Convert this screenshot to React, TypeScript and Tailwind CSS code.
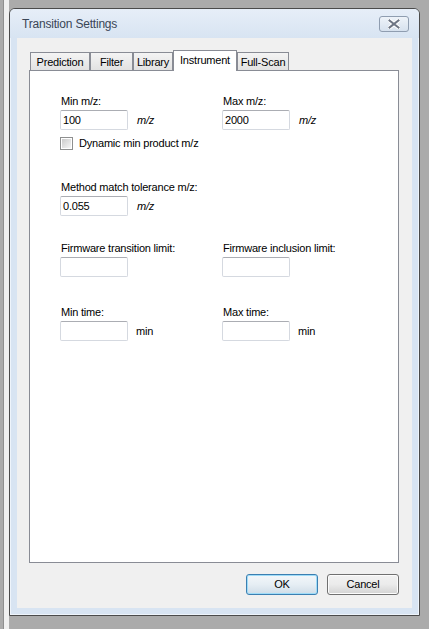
const tabs = [
  { label: 'Prediction', w: 'w-[60px]' },
  { label: 'Filter', w: 'w-[43px]' },
  { label: 'Library', w: 'w-[40px]' },
  { label: 'Instrument', w: 'w-[64px]', active: true },
  { label: 'Full-Scan', w: 'w-[52px]' },
];

const TextBox = ({ value }: { value?: string }) => (
  <div className="w-[68px] h-[20px] rounded-[2px] border border-[#d5d9e0] border-t-[#abadb3] bg-white px-[2px] text-[11px] leading-[18px] text-black">
    {value}
  </div>
);

const Field = ({ label, value, unit, italic }: { label: string; value?: string; unit?: string; italic?: boolean }) => (
  <div className="flex flex-col">
    <div className="h-[13px] leading-[13px] text-[11px] pl-px">{label}</div>
    <div className="mt-[2px] flex items-center">
      <TextBox value={value} />
      {unit && (
        <span className={italic ? 'ml-[9px] text-[11px] italic' : 'ml-[8px] text-[11px]'}>{unit}</span>
      )}
    </div>
  </div>
);

const Button = ({ label, isDefault }: { label: string; isDefault?: boolean }) => (
  <button
    type="button"
    className={
      isDefault
        ? 'w-[72px] h-[21px] rounded-[3px] border border-[#3c7fb1] bg-gradient-to-b from-[#f3f7fa] via-[#e6eef4] to-[#cfdde8] shadow-[inset_0_0_0_1px_#9fdcf8] text-[11px] text-black'
        : 'w-[72px] h-[21px] rounded-[3px] border border-[#707070] bg-gradient-to-b from-[#f2f2f2] via-[#ebebeb] to-[#d3d3d3] shadow-[inset_0_0_0_1px_#fcfcfc] text-[11px] text-black'
    }
  >
    {label}
  </button>
);

export default function App() {
  return (
    <div className="w-[429px] h-[629px] bg-[#ababab] flex overflow-hidden font-['Liberation_Sans',Arial,sans-serif] tracking-[-0.2px] text-black">
      <div className="w-[3px] bg-[#ababab]" />
      <div className="w-px bg-[#8f8f8f]" />
      <div className="w-[5px] bg-[#f0f0f0]" />
      <div className="pt-[8px]">
        <div className="w-[411px] h-[608px] rounded-t-[6px] border border-[#4b4b4b] bg-[#d8e4f2] flex flex-col shadow-[inset_0_0_0_1px_#eef4fb]">
          <div className="h-[29px] flex items-center justify-between pl-[12px] pr-[10px] bg-gradient-to-b from-[#e6eef8] to-[#d8e4f2] rounded-t-[5px]">
            <span className="text-[12px] text-[#3a4656]">Transition Settings</span>
            <div className="w-[30px] h-[16px] rounded-[3px] border border-[#8f9db0] bg-gradient-to-b from-[#eef3f9] to-[#d6e1ee] flex items-center justify-center">
              <svg width="12" height="10" viewBox="0 0 12 10">
                <path d="M1.5 1.5 L10.5 8.5 M10.5 1.5 L1.5 8.5" stroke="#ffffff" strokeWidth="4" strokeLinecap="square" />
                <path d="M1.5 1.5 L10.5 8.5 M10.5 1.5 L1.5 8.5" stroke="#6d7584" strokeWidth="2" strokeLinecap="square" />
              </svg>
            </div>
          </div>
          <div className="mx-[7px] h-[570px] bg-[#f0f0f0] pl-[12px] pr-[13px] pt-[12px] flex flex-col">
            <div className="flex items-end h-[20px] pl-px">
              {tabs.map((t) =>
                t.active ? (
                  <div
                    key={t.label}
                    className={`${t.w} relative z-10 h-[21px] -mb-px border border-b-0 border-[#898c95] bg-white text-[11px] text-center leading-[18px]`}
                  >
                    {t.label}
                  </div>
                ) : (
                  <div
                    key={t.label}
                    className={`${t.w} h-[18px] border border-b-0 border-[#898c95] bg-gradient-to-b from-[#f4f4f4] to-[#e2e2e2] text-[11px] text-center leading-[18px]`}
                  >
                    {t.label}
                  </div>
                ),
              )}
            </div>
            <div className="w-[370px] h-[493px] border border-[#898c95] bg-white pl-[30px] pt-[24px]">
              <div className="grid grid-cols-[162px_1fr]">
                <Field label="Min m/z:" value="100" unit="m/z" italic />
                <Field label="Max m/z:" value="2000" unit="m/z" italic />
              </div>
              <div className="mt-[7px] flex items-center">
                <div className="w-[13px] h-[13px] border border-[#8e8f8f] bg-white p-px">
                  <div className="w-full h-full bg-gradient-to-br from-[#cbcbcb] to-[#f6f6f6]" />
                </div>
                <span className="ml-[6px] text-[11px] leading-[13px]">Dynamic min product m/z</span>
              </div>
              <div className="mt-[31px]">
                <Field label="Method match tolerance m/z:" value="0.055" unit="m/z" italic />
              </div>
              <div className="mt-[26px] grid grid-cols-[162px_1fr]">
                <Field label="Firmware transition limit:" />
                <Field label="Firmware inclusion limit:" />
              </div>
              <div className="mt-[29px] grid grid-cols-[162px_1fr]">
                <Field label="Min time:" unit="min" />
                <Field label="Max time:" unit="min" />
              </div>
            </div>
            <div className="mt-[11px] flex justify-end gap-[9px]">
              <Button label="OK" isDefault />
              <Button label="Cancel" />
            </div>
          </div>
        </div>
      </div>
    </div>
  );
}
